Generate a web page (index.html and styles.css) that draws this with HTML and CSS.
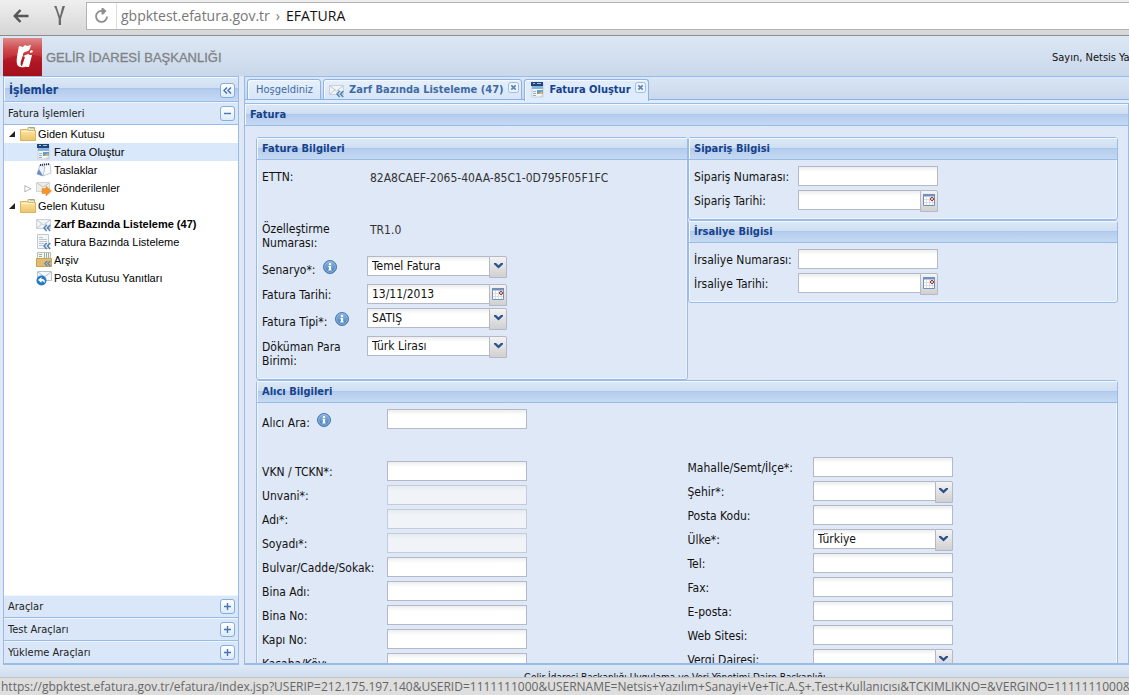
FILE: index.html
```html
<!DOCTYPE html>
<html lang="tr">
<head>
<meta charset="utf-8">
<title>EFATURA</title>
<link rel="stylesheet" href="styles.css">
</head>
<body>
<svg class="defs" aria-hidden="true">
  <defs>
    <linearGradient id="red" x1="0" y1="0" x2="0" y2="1"><stop offset="0" stop-color="#dd8a88"/><stop offset=".3" stop-color="#cf4a4e"/><stop offset=".65" stop-color="#ba1c28"/><stop offset="1" stop-color="#a31420"/></linearGradient>
    <linearGradient id="gold" x1="0" y1="0" x2="0" y2="1"><stop offset="0" stop-color="#fbe7a6"/><stop offset="1" stop-color="#ecc568"/></linearGradient>
    <radialGradient id="blue" cx=".5" cy=".3" r=".7"><stop offset="0" stop-color="#8fb9e2"/><stop offset="1" stop-color="#3a72b0"/></radialGradient>
  </defs>
  <symbol id="i-folder" viewBox="0 0 16 16"><path d="M8 3V1.500h6.500V5H8z" fill="#fff3cf" stroke="#cfa656"/><path d="M10 2h4" stroke="#5fb0c8"/><path d="M.5 3.500h7l1 1h7v10H.500z" fill="url(#gold)" stroke="#d9b263"/><path d="M1.500 5.500h13" stroke="#fff3cc"/></symbol>
  <symbol id="i-invoice" viewBox="0 0 16 16"><path d="M2 1h11v14H2z" fill="#f4f6f8" stroke="#b8c0c8" stroke-width=".6"/><path d="M1 0h12v4H1z" fill="#1e4478"/><path d="M3 1.500h2M7 1.500h4" stroke="#a8c4e8"/><path d="M2 4h11v3H2z" fill="#86b4dc"/><path d="M3 9.500h3M3 11.500h3M3 13.500h3" stroke="#a2acb6"/><path d="M7 8h6v4H7z" fill="#58a0dc"/><path d="M8 12l4-3 1 3z" fill="#eeb050"/><path d="M9 15l4-3v3z" fill="#d0d4d8"/></symbol>
  <symbol id="i-draft" viewBox="0 0 16 16"><path d="M4 3l10-1 1 9-8 3z" fill="#fafbfd" stroke="#b4bccc" stroke-width=".8"/><path d="M4 3L1 12l6 2 2-9z" fill="#f0f3f9" stroke="#a8b4cc" stroke-width=".8"/><path d="M4 3l10-1" stroke="#27375c" stroke-width="2" stroke-dasharray="1 1"/><path d="M1 12l2-5 4 7z" fill="#6c8cc8"/></symbol>
  <symbol id="i-mail" viewBox="0 0 16 16"><path d="M.5 3.500h14v9H.500z" fill="#f2f5f8" stroke="#c8d1d9"/><path d="M1 4l6.500 5L14 4M1 12l5-4M14 12L9 8" fill="none" stroke="#bcc6d0"/></symbol>
  <symbol id="i-back" viewBox="0 0 8 8"><path d="M3.700 1L1 4l2.700 3M7.200 1L4.500 4l2.700 3" fill="none" stroke="#5585b8" stroke-width="1.600"/></symbol>
  <symbol id="i-mailin" viewBox="0 0 16 16"><use href="#i-mail"/><use href="#i-back" x="7" y="8" width="8" height="8"/></symbol>
  <symbol id="i-sent" viewBox="0 0 16 16"><path d="M.5 2.500h13v9H.500z" fill="#eeeeec" stroke="#d6d6d1"/><path d="M1 3l6 4 6-4" fill="none" stroke="#c4c4c0"/><path d="M6 8.500h4V6l5.500 5L10 16v-2.500H6z" fill="#f6942c" stroke="#e8842a" stroke-width=".5"/></symbol>
  <symbol id="i-list" viewBox="0 0 16 16"><path d="M1.500.5h11v14h-11z" fill="#f4f6f8" stroke="#c0c8d0"/><path d="M3 3.500h4M3 5.500h8M3 7.500h8M3 9.500h5M3 11.500h4" stroke="#bcc6ce"/><use href="#i-back" x="7" y="8" width="8" height="8"/></symbol>
  <symbol id="i-archive" viewBox="0 0 16 16"><path d="M1.500.5h13v8h-13z" fill="#f2f4f0" stroke="#b8c0b8"/><path d="M3 2.500h3M3 4.500h3M8.500 1v6M10.500 1v6M12.500 1v6" stroke="#9ab09c"/><path d="M.5 6.500h15v8H.500z" fill="#dfbb74" stroke="#c9a258"/><use href="#i-back" x="8" y="8" width="7" height="7"/></symbol>
  <symbol id="i-reply" viewBox="0 0 16 16"><path d="M1.500 1.500h14v9h-14z" fill="#f5f7f9" stroke="#b7c2cc"/><path d="M2 2l6.500 5L15 2" fill="none" stroke="#b4bfca"/><circle cx="5.500" cy="10.500" r="5" fill="#2277c4"/><path d="M2 10l3.500-3v2c3 0 4 2 3 4-.5-1.300-1.500-1.700-3-1.700V13z" fill="#fff"/></symbol>
  <symbol id="i-info" viewBox="0 0 14 14"><circle cx="7" cy="7" r="6.500" fill="url(#blue)" stroke="#4a7ab2"/><circle cx="7" cy="7" r="5.300" fill="none" stroke="#a9cbee" stroke-width=".7"/><path d="M6 3h2v2H6zM5.500 6H8v3.500h.7v1H5.300v-1H6V7h-.5z" fill="#fff"/></symbol>
  <symbol id="i-down" viewBox="0 0 9 6"><path d="M0 0h2l2.500 2.300L7 0h2v1.300L4.500 5.500 0 1.300z" fill="#2b5291"/></symbol>
  <symbol id="i-cal" viewBox="0 0 12 12"><path d="M.5 .5h11v11H.500z" fill="#fff" stroke="#7390bd"/><path d="M0 0h12v2.500H0z" fill="#7390bd"/><path d="M3.500 3v8M6.500 3v8M9.500 3v8M1 5.500h10M1 8.500h10" stroke="#d9dce2"/><circle cx="9" cy="5" r="1.500" fill="#fff" stroke="#8c1d1d"/></symbol>
  <symbol id="i-plus" viewBox="0 0 15 15"><path d="M3 6.500h7M6.500 3v7" stroke="#4676ad" stroke-width="1.400"/></symbol>
  <symbol id="i-minus" viewBox="0 0 15 15"><path d="M3 6.500h7" stroke="#4676ad" stroke-width="1.400"/></symbol>
  <symbol id="i-left" viewBox="0 0 15 15"><path d="M6 3.500L3 6.500l3 3M10 3.500l-3 3 3 3" fill="none" stroke="#3f6fa8" stroke-width="1.400"/></symbol>
  <symbol id="i-x" viewBox="0 0 11 11"><rect x=".5" y=".5" width="10" height="10" rx="2" fill="#eef4fc" stroke="#9dbce4"/><path d="M3.300 3.300l4.400 4.400M7.700 3.300L3.300 7.700" stroke="#5d86b8" stroke-width="1.700"/></symbol>
</svg>

<header class="browser">
  <button class="nav" aria-label="Geri"><svg width="16" height="14" viewBox="0 0 16 14"><path d="M7.500 1L1.800 7l5.700 6M2 7h13.500" fill="none" stroke="#565656" stroke-width="2.500"/></svg></button>
  <button class="nav" aria-label="Yandex"><svg width="14" height="20" viewBox="0 0 14 20"><path d="M1 0h2.500C4.500 3 5.500 7 7 10 8 6 8.500 3 9.500 0H12L8 12.500V19H5.700v-6.500C4.500 9 3 3 1 0z" fill="#6a6a6a"/></svg></button>
  <div class="address">
    <button class="reload" aria-label="Yenile"><svg width="15" height="16" viewBox="0 0 15 16"><path d="M8.500 3A5.500 5.500 0 1 0 13 8.500" fill="none" stroke="#8e8e8e" stroke-width="1.800"/><path d="M7.500 0h1.700l3.300 3-3.300 3.500H7.500z" fill="#8e8e8e"/></svg></button>
    <span class="host">gbpktest.efatura.gov.tr</span><span class="sep">›</span><span class="name">EFATURA</span>
  </div>
</header>

<div class="brand">
  <svg class="logo" width="39" height="38" viewBox="0 0 39 38"><path d="M0 0h39v38H0z" fill="url(#red)"/><path d="M0 22Q20 13 39 19V38H0z" fill="#a00c18" opacity=".35"/><path d="M16 8l4 1 2-2 2 1 4-1c-1 2-1 5-3 6-3 1-5 1-5 4l-2 6c-1 3 0 5 1 5l3-9-2-1 5-2 2 1-3 11c-3 2-9 2-10-2-1-5 1-12 2-18zM27 13l2-1 1 2-3 1zM26 17h3l-3 12h-3z" fill="#fff"/></svg>
  <h1>GELİR İDARESİ BAŞKANLIĞI</h1>
  <span class="user">Sayın, Netsis Yazılım</span>
</div>

<div class="work">
  <aside class="side">
    <div class="bar"><h2>İşlemler</h2><button class="tool" aria-label="Daralt"><svg><use href="#i-left"/></svg></button></div>
    <div class="acc first"><span>Fatura İşlemleri</span><button class="tool" aria-label="Kapat"><svg><use href="#i-minus"/></svg></button></div>
    <ul class="tree">
      <li><i class="open"></i><svg><use href="#i-folder"/></svg><span>Giden Kutusu</span></li>
      <li class="sub sel"><i></i><svg><use href="#i-invoice"/></svg><span>Fatura Oluştur</span></li>
      <li class="sub"><i></i><svg><use href="#i-draft"/></svg><span>Taslaklar</span></li>
      <li class="sub"><i class="closed"></i><svg><use href="#i-sent"/></svg><span>Gönderilenler</span></li>
      <li><i class="open"></i><svg><use href="#i-folder"/></svg><span>Gelen Kutusu</span></li>
      <li class="sub"><i></i><svg><use href="#i-mailin"/></svg><b>Zarf Bazında Listeleme (47)</b></li>
      <li class="sub"><i></i><svg><use href="#i-list"/></svg><span>Fatura Bazında Listeleme</span></li>
      <li class="sub"><i></i><svg><use href="#i-archive"/></svg><span>Arşiv</span></li>
      <li class="sub"><i></i><svg><use href="#i-reply"/></svg><span>Posta Kutusu Yanıtları</span></li>
    </ul>
    <div class="acc"><span>Araçlar</span><button class="tool" aria-label="Aç"><svg><use href="#i-plus"/></svg></button></div>
    <div class="acc"><span>Test Araçları</span><button class="tool" aria-label="Aç"><svg><use href="#i-plus"/></svg></button></div>
    <div class="acc"><span>Yükleme Araçları</span><button class="tool" aria-label="Aç"><svg><use href="#i-plus"/></svg></button></div>
  </aside>

  <main class="main">
    <nav class="tabs">
      <div class="tab"><button class="label">Hoşgeldiniz</button></div>
      <div class="tab rich"><svg class="ico"><use href="#i-mailin"/></svg><button class="label">Zarf Bazında Listeleme (47)</button><button class="close" aria-label="Kapat"><svg><use href="#i-x"/></svg></button></div>
      <div class="tab rich active"><svg class="ico"><use href="#i-invoice"/></svg><button class="label">Fatura Oluştur</button><button class="close" aria-label="Kapat"><svg><use href="#i-x"/></svg></button></div>
    </nav>
    <div class="page">
      <div class="bar"><h2>Fatura</h2></div>
      <form class="form">
        <div class="top">
          <section class="panel">
            <div class="bar"><h3>Fatura Bilgileri</h3></div>
            <div class="body">
              <div class="row gap"><span class="lbl">ETTN:</span><output>82A8CAEF-2065-40AA-85C1-0D795F05F1FC</output></div>
              <div class="row two"><span class="lbl">Özelleştirme Numarası:</span><output>TR1.0</output></div>
              <div class="row tall"><label class="lbl" for="sen">Senaryo*: <svg class="info"><use href="#i-info"/></svg></label><span class="trig"><select id="sen"><option>Temel Fatura</option></select><span class="btn"><svg class="down"><use href="#i-down"/></svg></span></span></div>
              <div class="row"><label class="lbl" for="tar">Fatura Tarihi:</label><span class="trig"><input id="tar" value="13/11/2013"><button type="button" class="btn" aria-label="Takvim"><svg class="cal"><use href="#i-cal"/></svg></button></span></div>
              <div class="row tall"><label class="lbl" for="tip">Fatura Tipi*: <svg class="info"><use href="#i-info"/></svg></label><span class="trig"><select id="tip"><option>SATIŞ</option></select><span class="btn"><svg class="down"><use href="#i-down"/></svg></span></span></div>
              <div class="row two"><label class="lbl" for="par">Döküman Para Birimi:</label><span class="trig"><select id="par"><option>Türk Lirası</option></select><span class="btn"><svg class="down"><use href="#i-down"/></svg></span></span></div>
            </div>
          </section>
          <div class="stack">
            <section class="panel">
              <div class="bar"><h3>Sipariş Bilgisi</h3></div>
              <div class="body">
                <div class="row"><label class="lbl" for="sn">Sipariş Numarası:</label><input id="sn"></div>
                <div class="row"><label class="lbl" for="st">Sipariş Tarihi:</label><span class="trig"><input id="st"><button type="button" class="btn" aria-label="Takvim"><svg class="cal"><use href="#i-cal"/></svg></button></span></div>
              </div>
            </section>
            <section class="panel">
              <div class="bar"><h3>İrsaliye Bilgisi</h3></div>
              <div class="body">
                <div class="row"><label class="lbl" for="in">İrsaliye Numarası:</label><input id="in"></div>
                <div class="row"><label class="lbl" for="it">İrsaliye Tarihi:</label><span class="trig"><input id="it"><button type="button" class="btn" aria-label="Takvim"><svg class="cal"><use href="#i-cal"/></svg></button></span></div>
              </div>
            </section>
          </div>
        </div>
        <section class="panel">
          <div class="bar"><h3>Alıcı Bilgileri</h3></div>
          <div class="body cols">
            <div class="col">
              <div class="row gap tall"><label class="lbl" for="ara">Alıcı Ara: <svg class="info"><use href="#i-info"/></svg></label><input id="ara"></div>
              <div class="row"><label class="lbl" for="vkn">VKN / TCKN*:</label><input id="vkn"></div>
              <div class="row"><label class="lbl" for="unv">Unvani*:</label><input id="unv" disabled></div>
              <div class="row"><label class="lbl" for="adi">Adı*:</label><input id="adi" disabled></div>
              <div class="row"><label class="lbl" for="soy">Soyadı*:</label><input id="soy" disabled></div>
              <div class="row"><label class="lbl" for="bul">Bulvar/Cadde/Sokak:</label><input id="bul"></div>
              <div class="row"><label class="lbl" for="bad">Bina Adı:</label><input id="bad"></div>
              <div class="row"><label class="lbl" for="bno">Bina No:</label><input id="bno"></div>
              <div class="row"><label class="lbl" for="kno">Kapı No:</label><input id="kno"></div>
              <div class="row"><label class="lbl" for="kas">Kasaba/Köy:</label><input id="kas"></div>
            </div>
            <div class="col later">
              <div class="row"><label class="lbl" for="mah">Mahalle/Semt/İlçe*:</label><input id="mah"></div>
              <div class="row"><label class="lbl" for="seh">Şehir*:</label><span class="trig"><select id="seh"><option></option></select><span class="btn"><svg class="down"><use href="#i-down"/></svg></span></span></div>
              <div class="row"><label class="lbl" for="pk">Posta Kodu:</label><input id="pk"></div>
              <div class="row"><label class="lbl" for="ulk">Ülke*:</label><span class="trig"><select id="ulk"><option>Türkiye</option></select><span class="btn"><svg class="down"><use href="#i-down"/></svg></span></span></div>
              <div class="row"><label class="lbl" for="tel">Tel:</label><input id="tel"></div>
              <div class="row"><label class="lbl" for="fax">Fax:</label><input id="fax"></div>
              <div class="row"><label class="lbl" for="ep">E-posta:</label><input id="ep"></div>
              <div class="row"><label class="lbl" for="web">Web Sitesi:</label><input id="web"></div>
              <div class="row"><label class="lbl" for="ver">Vergi Dairesi:</label><span class="trig"><select id="ver"><option></option></select><span class="btn"><svg class="down"><use href="#i-down"/></svg></span></span></div>
            </div>
          </div>
        </section>
      </form>
    </div>
  </main>
</div>

<footer class="foot">Gelir İdaresi Başkanlığı Uygulama ve Veri Yönetimi Daire Başkanlığı</footer>
<div class="status">https://gbpktest.efatura.gov.tr/efatura/index.jsp?USERIP=212.175.197.140&amp;USERID=1111111000&amp;USERNAME=Netsis+Yazılım+Sanayi+Ve+Tic.A.Ş+.Test+Kullanıcısı&amp;TCKIMLIKNO=&amp;VERGINO=1111111000&amp;SONGIRIS</div>
</body>
</html>
```
FILE: styles.css
```css
* { box-sizing: border-box; }
body {
  margin: 0;
  height: 100vh;
  display: flex;
  flex-direction: column;
  overflow: hidden;
  background: #dfe8f6;
  font: 12px/14px "DejaVu Sans Condensed", "DejaVu Sans", sans-serif;
  color: #111;
}
.defs { position: absolute; width: 0; height: 0; }
h1, h2, h3 { margin: 0; font-size: 12px; }
button { border: 0; padding: 0; background: none; font: inherit; color: inherit; display: flex; align-items: center; justify-content: center; }

.browser {
  flex: none;
  height: 36px;
  display: flex;
  padding-top: 2px;
  background: linear-gradient(#efefef, #d6d6d6);
  border-bottom: 1px solid #8d8d8d;
}
.nav { width: 42px; height: 27px; }
.nav + .nav { width: 36px; margin-right: 8px; }
.address {
  flex: 1;
  height: 28px;
  display: flex;
  align-items: center;
  background: #fff;
  border: 1px solid #b2b2b2;
  border-right: 0;
  font: 14px/20px "Open Sans", "Noto Sans", sans-serif;
}
.reload { width: 30px; height: 26px; border-right: 1px solid #dcdcdc; margin-right: 4px; }
.host, .sep { color: #777; }
.sep { margin: 0 6px; }
.name { color: #111; }

.brand {
  flex: none;
  height: 40px;
  display: flex;
  align-items: flex-end;
  padding-left: 3px;
  background: linear-gradient(#dce7f4, #c9d8ea);
}
.brand h1 { flex: 1; padding: 0 0 10px 4px; font: 13px/16px "Liberation Sans", sans-serif; color: #808285; -webkit-text-stroke: 0.3px #808285; }
.user { flex: 0 0 77px; padding-bottom: 11px; font-size: 11px; white-space: nowrap; overflow: hidden; }

.work { flex: 1; min-height: 0; display: flex; gap: 5px; padding-left: 3px; background: #dfe8f6; }
.side { flex: 0 0 236px; display: flex; flex-direction: column; border: 1px solid #99bbe8; background: #fff; }
.bar {
  flex: none;
  height: 22px;
  display: flex;
  align-items: center;
  justify-content: space-between;
  padding: 1px 3px 0 5px;
  border-bottom: 1px solid #99bbe8;
  background: linear-gradient(#dce8f5, #cfdff2 46%, #a9c5e9 48%, #b5cdee 54%, #c5d9f2);
  box-shadow: inset 1px 1px #f4f8fd;
}
.bar h2, .bar h3 { font-size: 11px; color: #15428b; }
.side .bar { height: 25px; padding-top: 2px; }
.side .bar h2 { font-size: 12px; }
.tool { width: 15px; height: 15px; border: 1px solid #84aede; border-radius: 3px; background: linear-gradient(#fff, #dceafa); }
.tool svg { width: 15px; height: 15px; flex: none; }
.tool { justify-content: flex-start; align-items: flex-start; }
.acc {
  flex: none;
  height: 23px;
  display: flex;
  align-items: center;
  justify-content: space-between;
  padding: 1px 3px 0 4px;
  background: #d9e7f8;
  border-bottom: 1px solid #99bbe8;
  box-shadow: inset 0 1px #eef5fd;
  font-size: 11px;
  color: #222;
}
.tree { flex: 1; min-height: 0; margin: 0; padding: 0; list-style: none; font: 11px/18px "Liberation Sans", sans-serif; color: #000; }
.tree li { height: 18px; display: flex; align-items: center; white-space: nowrap; }
.tree li svg { width: 16px; height: 16px; margin-right: 2px; }
.tree i { width: 16px; height: 16px; display: flex; align-items: center; justify-content: center; }
.tree .sub { padding-left: 16px; }
.tree .sel { background: #d9e8fb; }
.open::before { content: ""; border: 3px solid; border-color: transparent #222 #222 transparent; }
.closed::before { content: "▷"; font: 9px/9px "DejaVu Sans", sans-serif; color: #777; }

.main { flex: 1; min-width: 0; display: flex; flex-direction: column; border: 1px solid #99bbe8; border-right: 0; }
.tabs { flex: none; height: 26px; display: flex; align-items: flex-start; gap: 2px; padding: 2px 2px 0; background: linear-gradient(#d9e6f5, #c9d8ec 22px, #8db2e3 22px, #8db2e3 23px, #deecfd 23px); }
.tab {
  height: 21px;
  display: flex;
  align-items: center;
  padding: 0 7px 0 8px;
  border: 1px solid #8db2e3;
  border-radius: 3px 3px 0 0;
  background: linear-gradient(#e6f0fb, #d6e5f8);
  box-shadow: inset 1px 1px #f4f9ff;
  font-size: 11px;
  color: #416aa3;
}
.tab .label { white-space: nowrap; }
.tab .ico { width: 16px; height: 16px; margin-right: 4px; }
.tab.rich { padding: 0 2px 0 5px; }
.rich .label { font-weight: bold; }
.close { align-self: flex-start; padding: 2px 0 0 4px; }
.close svg { width: 11px; height: 11px; }
.tab.active { height: 22px; padding-bottom: 2px; background: #deecfd; border-bottom: 0; color: #15428b; }
.page { flex: 1; min-height: 0; display: flex; flex-direction: column; overflow: hidden; border: solid #99bbe8; border-width: 1px 1px 1px 0; }
.form { flex: none; padding: 11px 10px 0 11px; }
.top { display: flex; align-items: flex-start; }
.top > * { flex: 1; min-width: 0; }
.panel { border: 1px solid #99bbe8; border-radius: 3px; box-shadow: inset 0 0 0 1px #f0f6fd; }
.body { padding: 6px 4px 5px 5px; }
.row { height: 24px; display: flex; align-items: flex-start; }
.row.tall { height: 28px; }
.row.two { height: 38px; }
.row.gap { height: 52px; }
.lbl { flex: 0 0 105px; padding-top: 4px; }
.stack .lbl { flex-basis: 104px; }
.tall .lbl { white-space: nowrap; }
.cols .lbl { flex-basis: 125px; }
.info { width: 14px; height: 14px; margin-left: 4px; }
output { padding: 5px 0 0 3px; color: #333; }
input, select {
  width: 140px;
  height: 20px;
  margin: 0;
  padding: 0 4px;
  appearance: none;
  border: 1px solid #b5b8c8;
  border-radius: 0;
  background: linear-gradient(#eceeee, #fff 5px);
  font: inherit;
  color: #111;
}
input:disabled { border-color: #c6cbda; background: linear-gradient(#e6ebf0, #f0f4f9 5px); }
.trig { width: 140px; display: flex; align-items: flex-start; }
.trig > :first-child { flex: 1; min-width: 0; width: auto; border-right: 0; }
.btn { width: 18px; height: 22px; display: flex; align-items: center; justify-content: center; padding-bottom: 2px; border: 1px solid #b5b8c8; border-radius: 0 2px 0 0; background: linear-gradient(#f4f4f4, #d0d0d0); }
.down { width: 9px; height: 6px; }
.cal { width: 12px; height: 12px; }
.cols { display: flex; }
.col { flex: 1; min-width: 0; }
.later { padding-top: 48px; }

.foot { flex: none; height: 30px; padding: 6px 0 0 524px; white-space: nowrap; font-size: 10px; background: linear-gradient(#dfe9f6, #cddcee 14px); }
.status {
  position: fixed;
  left: 0;
  right: 0;
  bottom: 0;
  height: 18px;
  padding-left: 1px;
  border-top: 1px solid #c4c4c4;
  background: #dedede;
  color: #666;
  font: 12px/18px "Open Sans", "Noto Sans", sans-serif;
  white-space: nowrap;
  overflow: hidden;
}
```
